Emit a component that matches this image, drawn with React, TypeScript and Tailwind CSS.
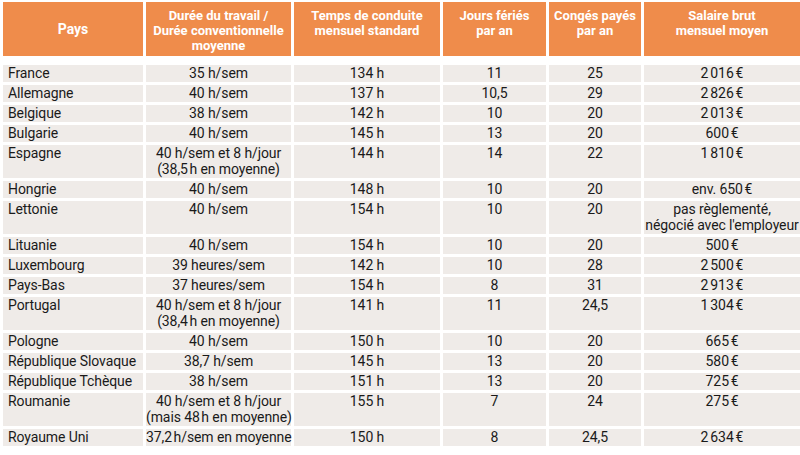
const NNBSP = '\u202F';

type Row = {
  pays: string;
  duree: string[];
  temps: string;
  jours: string;
  conges: string;
  salaire: string[];
  tall?: boolean;
};

const ROWS: Row[] = [
  { pays: 'France', duree: ['35 h/sem'], temps: '134 h', jours: '11', conges: '25', salaire: [`2${NNBSP}016${NNBSP}€`] },
  { pays: 'Allemagne', duree: ['40 h/sem'], temps: '137 h', jours: '10,5', conges: '29', salaire: [`2${NNBSP}826${NNBSP}€`] },
  { pays: 'Belgique', duree: ['38 h/sem'], temps: '142 h', jours: '10', conges: '20', salaire: [`2${NNBSP}013${NNBSP}€`] },
  { pays: 'Bulgarie', duree: ['40 h/sem'], temps: '145 h', jours: '13', conges: '20', salaire: [`600${NNBSP}€`] },
  {
    pays: 'Espagne',
    duree: ['40 h/sem et 8 h/jour', `(38,5${NNBSP}h en moyenne)`],
    temps: '144 h',
    jours: '14',
    conges: '22',
    salaire: [`1${NNBSP}810${NNBSP}€`],
    tall: true,
  },
  { pays: 'Hongrie', duree: ['40 h/sem'], temps: '148 h', jours: '10', conges: '20', salaire: [`env. 650${NNBSP}€`] },
  {
    pays: 'Lettonie',
    duree: ['40 h/sem'],
    temps: '154 h',
    jours: '10',
    conges: '20',
    salaire: ['pas règlementé,', "négocié avec l'employeur"],
    tall: true,
  },
  { pays: 'Lituanie', duree: ['40 h/sem'], temps: '154 h', jours: '10', conges: '20', salaire: [`500${NNBSP}€`] },
  { pays: 'Luxembourg', duree: ['39 heures/sem'], temps: '142 h', jours: '10', conges: '28', salaire: [`2${NNBSP}500${NNBSP}€`] },
  { pays: 'Pays-Bas', duree: ['37 heures/sem'], temps: '154 h', jours: '8', conges: '31', salaire: [`2${NNBSP}913${NNBSP}€`] },
  {
    pays: 'Portugal',
    duree: ['40 h/sem et 8 h/jour', `(38,4${NNBSP}h en moyenne)`],
    temps: '141 h',
    jours: '11',
    conges: '24,5',
    salaire: [`1${NNBSP}304${NNBSP}€`],
    tall: true,
  },
  { pays: 'Pologne', duree: ['40 h/sem'], temps: '150 h', jours: '10', conges: '20', salaire: [`665${NNBSP}€`] },
  { pays: 'République Slovaque', duree: ['38,7 h/sem'], temps: '145 h', jours: '13', conges: '20', salaire: [`580${NNBSP}€`] },
  { pays: 'République Tchèque', duree: ['38 h/sem'], temps: '151 h', jours: '13', conges: '20', salaire: [`725${NNBSP}€`] },
  {
    pays: 'Roumanie',
    duree: ['40 h/sem et 8 h/jour', `(mais 48${NNBSP}h en moyenne)`],
    temps: '155 h',
    jours: '7',
    conges: '24',
    salaire: [`275${NNBSP}€`],
    tall: true,
  },
  { pays: 'Royaume Uni', duree: [`37,2${NNBSP}h/sem en moyenne`], temps: '150 h', jours: '8', conges: '24,5', salaire: [`2${NNBSP}634${NNBSP}€`] },
];

const HEADERS = [
  ['Durée du travail /', 'Durée conventionnelle', 'moyenne'],
  ['Temps de conduite', 'mensuel standard'],
  ['Jours fériés', 'par an'],
  ['Congés payés', 'par an'],
  ['Salaire brut', 'mensuel moyen'],
];

function Cell({ lines, tall, left }: { lines: string[]; tall?: boolean; left?: boolean }) {
  return (
    <div
      className={`bg-[#efebe8] text-[14px] leading-[16px] text-[#1a1a1a] ${tall ? 'h-[33px]' : 'h-[17px]'} ${
        left ? 'pl-[5px] text-left' : 'text-center'
      }`}
    >
      {lines.map((l, i) => (
        <div key={i} className="whitespace-nowrap tracking-[-0.1px]">
          {l}
        </div>
      ))}
    </div>
  );
}

export default function App() {
  return (
    <div className="h-[455px] w-[800px] overflow-hidden bg-white pl-[3px] pt-[2px] font-['Roboto',sans-serif]">
      <div className="grid grid-cols-[140px_145px_146px_103px_92px_156px] gap-x-[3px] gap-y-[3px]">
        <div className="flex h-[54px] items-center justify-center bg-[#ef8c4b] text-[14px] font-bold text-white">
          Pays
        </div>
        {HEADERS.map((h, i) => (
          <div
            key={i}
            className="h-[54px] bg-[#ef8c4b] pt-[6px] text-center text-[13px] font-bold leading-[15px] text-white"
          >
            {h.map((l) => (
              <div key={l} className="whitespace-nowrap">
                {l}
              </div>
            ))}
          </div>
        ))}

        <div className="col-span-6 h-[3px]" />

        {ROWS.map((r) => (
          <div key={r.pays} className="contents">
            <Cell lines={[r.pays]} tall={r.tall} left />
            <Cell lines={r.duree} tall={r.tall} />
            <Cell lines={[r.temps]} tall={r.tall} />
            <Cell lines={[r.jours]} tall={r.tall} />
            <Cell lines={[r.conges]} tall={r.tall} />
            <Cell lines={r.salaire} tall={r.tall} />
          </div>
        ))}
      </div>
    </div>
  );
}
